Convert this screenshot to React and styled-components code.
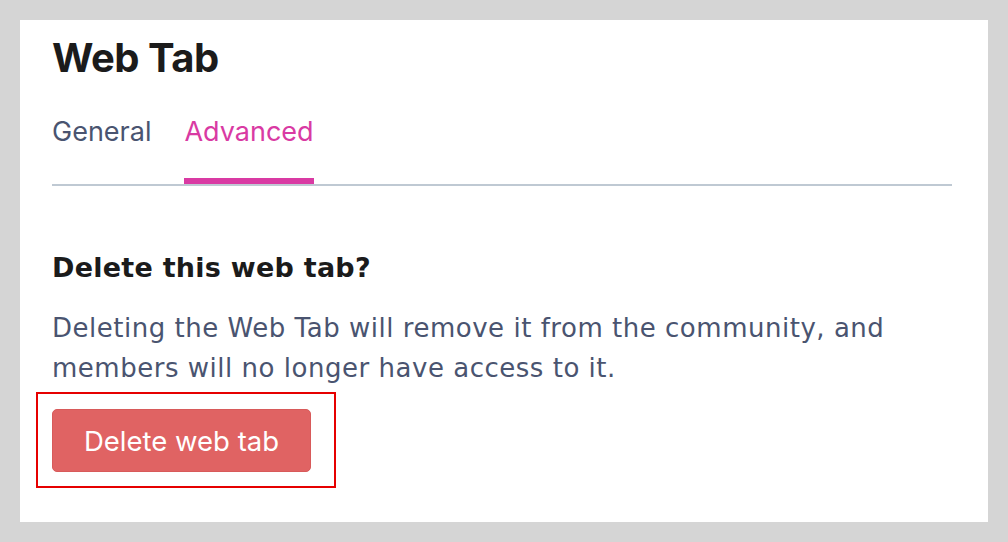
import React, { useState } from "react";
import styled, { createGlobalStyle } from "styled-components";

const GlobalStyle = createGlobalStyle`
  html, body {
    margin: 0;
    padding: 0;
    background: #d5d5d5;
  }
  * {
    box-sizing: border-box;
  }
`;

const tabs = ["General", "Advanced"];

export default function App() {
  const [active, setActive] = useState("Advanced");

  return (
    <>
      <GlobalStyle />
      <Page>
        <Card>
          <Title>Web Tab</Title>
          <TabBar>
            {tabs.map((t) => (
              <Tab key={t} $active={t === active} onClick={() => setActive(t)}>
                {t}
              </Tab>
            ))}
          </TabBar>
          <Section>
            <Heading>Delete this web tab?</Heading>
            <Description>
              Deleting the Web Tab will remove it from the community, and
              <br />
              members will no longer have access to it.
            </Description>
            <Highlight>
              <DangerButton>Delete web tab</DangerButton>
            </Highlight>
          </Section>
        </Card>
      </Page>
    </>
  );
}

const Page = styled.div`
  padding: 20px;
  height: 542px;
  font-family: Inter, "Liberation Sans", sans-serif;
`;

const Card = styled.div`
  background: #ffffff;
  height: 502px;
  width: 968px;
  padding: 0 36px 0 32px;
`;

const Title = styled.h1`
  margin: 0;
  padding-top: 14px;
  font-size: 40px;
  line-height: 48px;
  letter-spacing: -0.5px;
  font-weight: 700;
  color: #1b1b1b;
`;

const TabBar = styled.div`
  display: flex;
  gap: 33px;
  margin-top: 33px;
  border-bottom: 2px solid #bfc9d3;
`;

const Tab = styled.div`
  font-size: 27px;
  line-height: 34px;
  padding-bottom: 29px;
  color: ${(p) => (p.$active ? "#d93aa3" : "#4a5470")};
  border-bottom: 6px solid ${(p) => (p.$active ? "#d93aa3" : "transparent")};
  cursor: pointer;
`;

const Section = styled.div`
  padding-top: 65px;
`;

const Heading = styled.h2`
  margin: 0;
  font-family: "DejaVu Sans", sans-serif;
  font-size: 27px;
  line-height: 34px;
  letter-spacing: 0.25px;
  font-weight: 700;
  color: #1b1b1b;
`;

const Description = styled.p`
  margin: 23px 0 0;
  font-family: "DejaVu Sans", sans-serif;
  font-size: 26px;
  line-height: 40px;
  letter-spacing: 0.52px;
  color: #4a5470;
`;

const Highlight = styled.div`
  display: inline-block;
  margin: 4px 0 0 -16px;
  padding: 15px 23px 14px 14px;
  border: 2px solid #e60000;
`;

const DangerButton = styled.button`
  display: block;
  width: 259px;
  height: 63px;
  border: 1px solid #d85a5a;
  border-radius: 5px;
  background: #e06363;
  color: #ffffff;
  font-family: Inter, "Liberation Sans", sans-serif;
  font-size: 27.5px;
  cursor: pointer;
`;
